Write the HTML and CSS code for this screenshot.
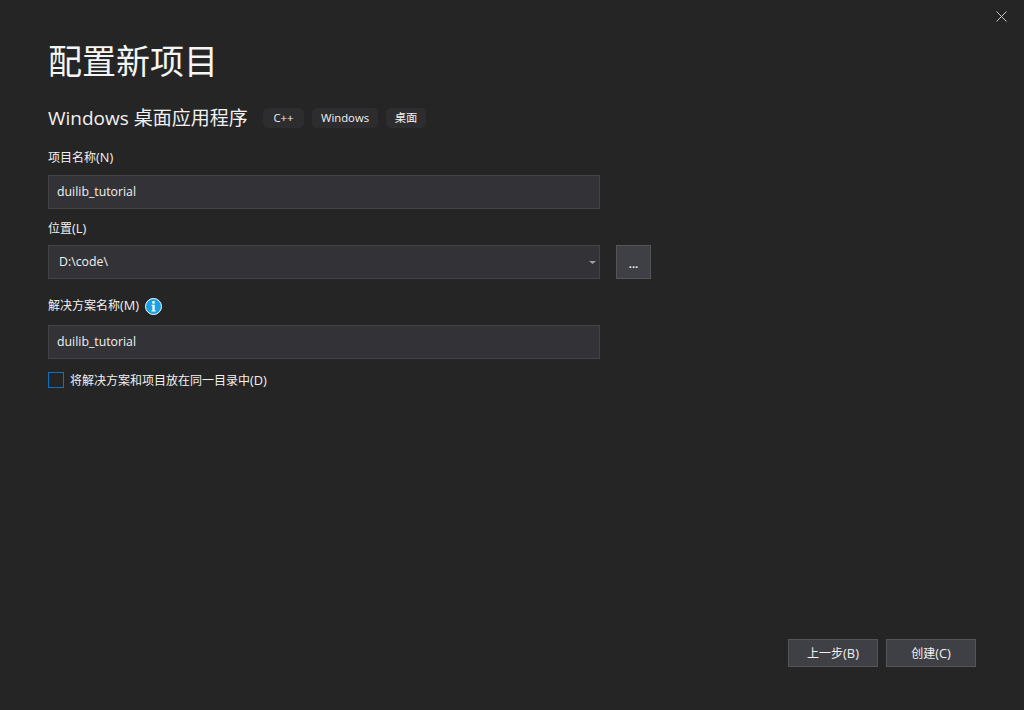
FILE: index.html
```html
<!DOCTYPE html>
<html lang="zh-CN">
<head>
<meta charset="utf-8">
<title>配置新项目</title>
<link rel="stylesheet" href="styles.css">
</head>
<body>
<div class="dialog">
  <header class="top-bar">
    <button class="close" aria-label="关闭">
      <svg width="11" height="11" viewBox="0 0 11 11"><path d="M.5.5l10 10M10.5.5l-10 10" stroke="#c8c8c8" stroke-width="1" fill="none"/></svg>
    </button>
  </header>
  <main class="content">
    <h1 class="title">配置新项目</h1>
    <div class="subtitle-row">
      <h2 class="subtitle">Windows 桌面应用程序</h2>
      <div class="tags">
        <span class="tag tag-cpp">C++</span>
        <span class="tag tag-win">Windows</span>
        <span class="tag tag-desk">桌面</span>
      </div>
    </div>
    <label class="label label-name">项目名称<span class="lat">(N)</span></label>
    <div class="input">duilib_tutorial</div>
    <label class="label label-loc">位置<span class="lat">(L)</span></label>
    <div class="loc-row">
      <div class="input input-select">
        <span>D:\code\</span>
        <svg class="caret" width="7" height="3" viewBox="0 0 7 3"><path d="M0 0h7L3.5 3z" fill="#a0a0a0"/></svg>
      </div>
      <button class="browse">...</button>
    </div>
    <div class="label label-sol">
      <label>解决方案名称<span class="lat">(M)</span></label>
      <svg class="info" width="17" height="17" viewBox="0 0 17 17"><circle cx="8.5" cy="8.5" r="8" fill="#1ba1e2" stroke="#fff" stroke-width="1"/><rect x="7.3" y="3.2" width="2.4" height="2.4" fill="#fff"/><path d="M6.6 6.8h3.1v5.6h1v1.2H6.4v-1.2h1v-4.4h-.8z" fill="#fff"/></svg>
    </div>
    <div class="input">duilib_tutorial</div>
    <div class="check-row">
      <span class="checkbox"></span>
      <span class="check-text">将解决方案和项目放在同一目录中<span class="lat">(D)</span></span>
    </div>
  </main>
  <footer class="footer">
    <button class="btn">上一步<span class="lat">(B)</span></button>
    <button class="btn">创建<span class="lat">(C)</span></button>
  </footer>
</div>
</body>
</html>
```
FILE: styles.css
```css
* { box-sizing: border-box; }
html, body { margin: 0; height: 100%; }
body {
  background: #252526;
  color: #f1f1f1;
  font-family: "Open Sans", "Noto Sans CJK SC", sans-serif;
  overflow: hidden;
}
.dialog { height: 710px; display: flex; flex-direction: column; }
.top-bar { height: 0; display: flex; justify-content: flex-end; }
.close {
  width: 11px; height: 11px; padding: 0; margin: 11px 17px 0 0;
  background: none; border: 0; display: block; line-height: 0; flex: none;
}
.content { flex: 1; padding: 37px 0 0 48px; }
.title {
  margin: 0; font-size: 34px; line-height: 46px; font-weight: 400; color: #f5f5f5;
  font-family: "Noto Sans CJK SC", sans-serif;
}
.subtitle-row { display: flex; align-items: center; margin-top: 23px; height: 24px; }
.subtitle { margin: 0; font-size: 19px; line-height: 24px; font-weight: 400; width: 215px; white-space: nowrap; }
.tags { display: flex; gap: 8px; }
.tag {
  height: 20px; line-height: 20px; background: #2d2d30; border-radius: 5px;
  font-size: 11.3px; text-align: center; color: #f1f1f1;
}
.tag-cpp { width: 41px; }
.tag-win { width: 66px; }
.tag-desk { width: 40px; }
.label { display: block; font-size: 12px; line-height: 16px; height: 16px; color: #f1f1f1; }
.lat { font-size: 12.8px; line-height: 1; }
.label-name { margin-top: 20px; margin-bottom: 9px; }
.label-loc { margin-top: 12px; margin-bottom: 8px; }
.label-sol { margin-top: 19px; margin-bottom: 11px; display: flex; align-items: center; gap: 6px; }
.input {
  width: 552px; height: 34px; background: #333337; border: 1px solid #434346;
  font-size: 12.3px; line-height: 32px; padding-left: 8px; color: #f1f1f1;
}
.input-select { display: flex; align-items: center; justify-content: space-between; padding-left: 10px; padding-right: 3px; }
.loc-row { display: flex; gap: 16px; }
.browse {
  width: 35px; height: 34px; padding: 2px 0 0; background: #3f3f46; border: 1px solid #555558;
  color: #f1f1f1; font-size: 11px; font-weight: 700; font-family: inherit;
}
.check-row { display: flex; align-items: center; margin-top: 12px; height: 18px; }
.checkbox { width: 16px; height: 16px; border: 1px solid #0e72c4; background: #252526; flex: none; }
.check-text { margin-left: 6px; padding-top: 2px; font-size: 12px; line-height: 18px; }
.footer { display: flex; justify-content: flex-end; gap: 8px; padding: 0 48px 43px 0; }
.btn {
  width: 90px; height: 28px; background: #3f3f46; border: 1px solid #555558;
  color: #f1f1f1; font-size: 12px; font-family: inherit; padding: 0;
}
```
